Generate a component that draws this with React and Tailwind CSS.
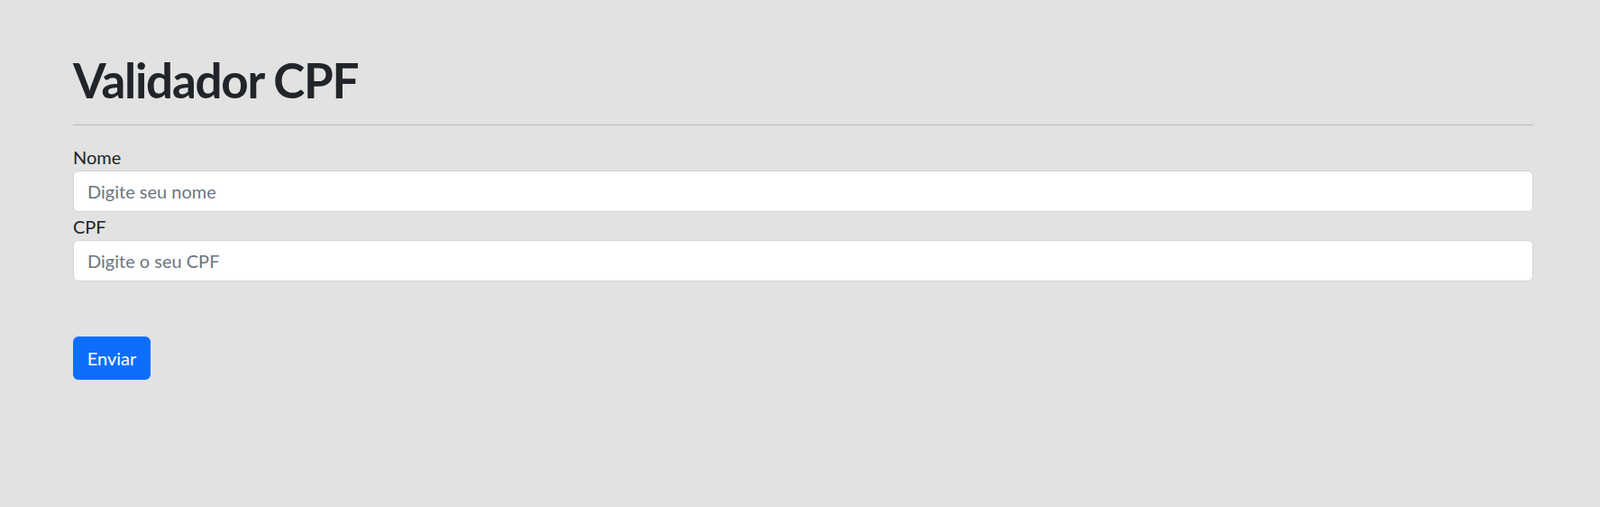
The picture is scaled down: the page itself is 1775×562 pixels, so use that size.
export default function App() {
  return (
    <div className="min-h-[562px] w-full bg-[#e2e2e2] font-['Lato',sans-serif] text-[#212529]">
      <div className="ml-[81px] w-[1620px] pt-[57px]">
        <h1 className="text-[53px] font-bold leading-[1.2] tracking-[-1.3px]">Validador CPF</h1>
        <hr className="mt-[17px] border-0 border-t border-[#b8b8b9]" />
        <form className="mt-[20px]" onSubmit={(e) => e.preventDefault()}>
          <label className="block text-[20px] leading-[30px]">Nome</label>
          <input
            placeholder="Digite seu nome"
            className="block h-[46px] w-full rounded-[6px] border border-[#d0d4d9] bg-white px-[15px] text-[20px] text-[#212529] placeholder:text-[#6c757d] focus:outline-none"
          />
          <label className="mt-px block text-[20px] leading-[30px]">CPF</label>
          <input
            placeholder="Digite o seu CPF"
            className="block h-[46px] w-full rounded-[6px] border border-[#d0d4d9] bg-white px-[15px] text-[20px] text-[#212529] placeholder:text-[#6c757d] focus:outline-none"
          />
          <button
            type="submit"
            className="mt-[61px] h-[48px] w-[86px] rounded-[6px] bg-[#0d6efd] text-[20px] text-white"
          >
            Enviar
          </button>
        </form>
      </div>
    </div>
  )
}
